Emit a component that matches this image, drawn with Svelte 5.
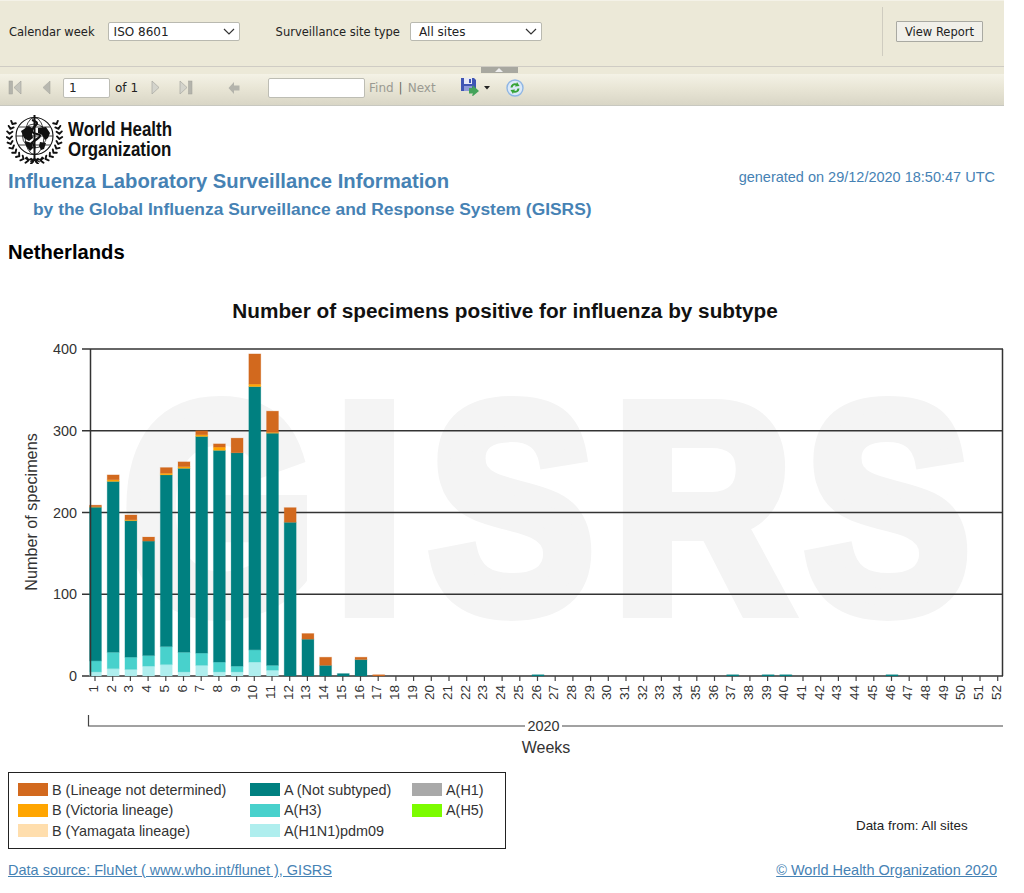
<script>
  const weekRows = [
    [1, 5, 18.5, 206.5, 207, 209],
    [2, 9, 29, 238, 240, 246],
    [3, 8, 23, 190, 191, 197],
    [4, 12, 25, 165, 165, 170],
    [5, 14, 36, 246, 248, 255],
    [6, 5, 29, 254, 256, 262],
    [7, 13, 28, 293, 295, 300],
    [8, 5, 17, 276, 280, 284],
    [9, 5, 12, 273, 273, 291],
    [10, 17, 32, 354, 357, 394],
    [11, 7, 13, 297, 298, 324],
    [12, 0, 0, 188, 188, 206],
    [13, 0, 0, 45, 45, 52],
    [14, 0, 0, 13, 13, 23],
    [15, 0, 0, 3, 3, 3],
    [16, 0, 0, 20, 20, 23],
    [17, 0, 0, 0, 0, 1.6],
    [26, 0, 0, 1.6, 1.6, 1.6],
    [37, 0, 0, 1.6, 1.6, 1.6],
    [39, 0, 0, 1.6, 1.6, 1.6],
    [40, 0, 0, 1.6, 1.6, 1.6],
    [46, 0, 0, 1.6, 1.6, 1.6]
  ];
  const base = 676;
  const scale = 0.8175;
  const cx = (w) => 95.5 + 17.7 * (w - 1);
  const yOf = (v) => base - v * scale;
  const weeks = Array.from({ length: 52 }, (_, i) => i + 1);
  const segments = weekRows.flatMap(([w, pdm, h3, ns, vic, total]) => {
    const parts = [
      ['#afeeee', 0, pdm],
      ['#48d1cc', pdm, h3],
      ['#008080', h3, ns],
      ['#ffa500', ns, vic],
      ['#d2691e', vic, total]
    ];
    return parts
      .filter((p) => p[2] > p[1])
      .map((p) => ({ x: cx(w) - 6, y: yOf(p[2]), h: (p[2] - p[1]) * scale, fill: p[0] }));
  });
  const legend = [
    [
      ['#d2691e', 'B (Lineage not determined)'],
      ['#ffa500', 'B (Victoria lineage)'],
      ['#ffdead', 'B (Yamagata lineage)']
    ],
    [
      ['#008080', 'A (Not subtyped)'],
      ['#48d1cc', 'A(H3)'],
      ['#afeeee', 'A(H1N1)pdm09']
    ],
    [
      ['#a9a9a9', 'A(H1)'],
      ['#7cfc00', 'A(H5)']
    ]
  ];
  // laurel leaves of the emblem, along an arc round the globe
  const leaves = [];
  for (let i = 0; i < 11; i++) {
    const a = ((-28 + i * 11.5) * Math.PI) / 180;
    const r = 25;
    const px = r * Math.cos(a);
    const py = 22 + r * Math.sin(a) * 1.02;
    for (const side of [-1, 1]) {
      const x = 28.5 + side * px;
      const tipOut = 28.5 + side * (px + 3.4 * Math.cos(a - 0.7));
      const tipOutY = py + 3.4 * Math.sin(a - 0.7);
      const tipIn = 28.5 + side * (px - 3.4 * Math.cos(a + 0.7));
      const tipInY = py - 3.4 * Math.sin(a + 0.7);
      leaves.push(`M${x.toFixed(1)} ${py.toFixed(1)}L${tipOut.toFixed(1)} ${tipOutY.toFixed(1)}`);
      leaves.push(`M${x.toFixed(1)} ${py.toFixed(1)}L${tipIn.toFixed(1)} ${tipInY.toFixed(1)}`);
    }
  }
  const laurel = leaves.join('');
</script>

<div class="page">
  <div class="params">
    <div class="fields">
      <span class="lbl first">Calendar week</span>
      <div class="select s1"><span>ISO 8601</span><svg width="12" height="7" viewBox="0 0 12 7"><path d="M1 1l5 5 5-5" fill="none" stroke="#333" stroke-width="1.2"/></svg></div>
      <span class="lbl second">Surveillance site type</span>
      <div class="select s2"><span>All sites</span><svg width="12" height="7" viewBox="0 0 12 7"><path d="M1 1l5 5 5-5" fill="none" stroke="#333" stroke-width="1.2"/></svg></div>
    </div>
    <div class="action"><button class="view">View Report</button></div>
  </div>
  <div class="splitter"><div class="handle"><svg width="8" height="4" viewBox="0 0 8 4"><path d="M0 4l4-4 4 4z" fill="#eee"/></svg></div></div>
  <div class="toolbar">
    <svg class="ic first-ic" width="14" height="15" viewBox="0 0 14 15"><rect x="1" y="1" width="3.500" height="13" fill="#b4b4ac" stroke="#a0a098" stroke-width=".5"/><path d="M13 1v13L6 7.500z" fill="#c4c4bc" stroke="#a0a098" stroke-width=".6"/></svg>
    <svg class="ic prev-ic" width="10" height="15" viewBox="0 0 10 15"><path d="M9 1v13L2 7.500z" fill="#b8b8b0" stroke="#a8a8a0" stroke-width=".6"/></svg>
    <div class="inp page-inp">1</div>
    <span class="of">of 1</span>
    <svg class="ic next-ic" width="10" height="15" viewBox="0 0 10 15"><path d="M1 1v13l7-6.500z" fill="#d4d4cc" stroke="#a8a8a0" stroke-width=".7"/></svg>
    <svg class="ic last-ic" width="14" height="15" viewBox="0 0 14 15"><path d="M1 1v13l7-6.500z" fill="#d4d4cc" stroke="#a8a8a0" stroke-width=".7"/><rect x="9.500" y="1" width="3.500" height="13" fill="#b4b4ac" stroke="#a0a098" stroke-width=".5"/></svg>
    <svg class="ic back-ic" width="12" height="14" viewBox="0 0 12 14"><path d="M6 1v3.500h5.500v5H6V13L.5 7z" fill="#b4b4ac"/></svg>
    <div class="inp find-inp"></div>
    <span class="find">Find</span><span class="sep">|</span><span class="next">Next</span>
    <svg class="ic save-ic" width="18" height="18" viewBox="0 0 18 18">
      <path d="M0 0h13l2 2v11H0z" fill="#3f55b4"/>
      <rect x="3" y="0" width="8" height="6" fill="#e6e8f6"/>
      <rect x="8" y="1" width="2" height="4" fill="#3f55b4"/>
      <rect x="3" y="8" width="8" height="5" fill="#8e9ad8"/>
      <path d="M8 10h4l-1-2 1-.5 6 5.500-6 5-1-.5 1-2H8z" fill="#44a35a"/>
    </svg>
    <svg class="ic drop-ic" width="6" height="4" viewBox="0 0 6 4"><path d="M0 0h6L3 3.500z" fill="#222"/></svg>
    <svg class="ic refresh-ic" width="18" height="18" viewBox="0 0 18 18">
      <circle cx="9" cy="9" r="8" fill="#dbe9f8" stroke="#8fb6e4" stroke-width="1.400"/>
      <path d="M4.500 8.500A4.500 4.500 0 0 1 10.500 4.500l.5-1.500 2.500 4-4.500 .5.500-1.500A2.800 2.800 0 0 0 6.500 8.500z" fill="#36a336"/>
      <path d="M13.500 9.500A4.500 4.500 0 0 1 7.500 13.500L7 15l-2.500-4 4.500-.5-.5 1.500A2.800 2.800 0 0 0 11.500 9.500z" fill="#36a336"/>
    </svg>
  </div>

  <div class="report">
    <div class="logo">
      <svg width="58" height="50" viewBox="0 0 58 50">
        <g fill="none" stroke="#111">
          <circle cx="28.500" cy="22" r="18.500" stroke-width="1.100"/>
          <ellipse cx="28.500" cy="22" rx="9.500" ry="18.500" stroke-width=".8"/>
          <circle cx="28.500" cy="22" r="12" stroke-width=".8"/>
          <path d="M10 22h37M13 13h31M13 31h31" stroke-width=".8"/>
        </g>
        <path d="M15 17l8-5 4 3-1 5 1 4-4 3-5-3zM32 14l8-1 4 6-2 5-3 2-3-5-4-2zM19 27l7 2 1 5-3 3-4-5zM34 28l6 1-2 6-3 1-2-4z" fill="#111"/>
        <path d="M28.500 1v46" stroke="#111" stroke-width="2"/>
        <path d="M26 6q7 2 4 5t-4 5q-1 3 5 4t0 5-5 4 3 5" fill="none" stroke="#111" stroke-width="2.200"/>
        <path d={laurel} fill="none" stroke="#111" stroke-width="1.900" stroke-linecap="round"/>
        <path d="M19 44q5 3 9.500 1 4.500 2 9.500-1" fill="none" stroke="#111" stroke-width="1.600"/>
        <path d="M24 48l5-2 5 2" fill="none" stroke="#111" stroke-width="1"/>
      </svg>
      <div class="who"><div>World Health</div><div>Organization</div></div>
    </div>
    <div class="title-row">
      <div class="h1">Influenza Laboratory Surveillance Information</div>
      <div class="gen">generated on 29/12/2020 18:50:47 UTC</div>
    </div>
    <div class="h2">by the Global Influenza Surveillance and Response System (GISRS)</div>
    <div class="country">Netherlands</div>
    <div class="chart-title">Number of specimens positive for influenza by subtype</div>

    <svg class="chart" width="1024" height="420" viewBox="0 340 1024 420">
      <text class="mark" transform="scale(.84 1)" x="146.400 398.800 510.700 729.800 958.300" y="610">GISRS</text>
      {#each [0, 100, 200, 300, 400] as v}
        <line x1="82" x2="1003" y1={yOf(v)} y2={yOf(v)} class="grid"/>
        <text class="tick" x="77" y={yOf(v) + 5} text-anchor="end">{v}</text>
      {/each}
      {#each segments as s}
        <rect class="seg" x={s.x} y={s.y} width="12" height={s.h} fill={s.fill} stroke={s.fill}/>
      {/each}
      <line x1="90.500" x2="90.500" y1="349" y2="676" class="axis"/>
      <line x1="1002.500" x2="1002.500" y1="349" y2="676" class="axis"/>
      {#each weeks as w}
        <line x1={cx(w) - 0.5} x2={cx(w) - 0.5} y1="676" y2="681" class="tickline"/>
        <text class="wk" transform="translate({cx(w) + 2.500} 685) rotate(-90)" text-anchor="end">{w}</text>
      {/each}
      <path d="M88.500 715v11H525M562 726h441" class="tickline" fill="none"/>
      <text class="tick" x="543.500" y="731" text-anchor="middle">2020</text>
      <text class="axis-t" x="546" y="753" text-anchor="middle">Weeks</text>
      <text class="axis-t y" transform="translate(37 512) rotate(-90)" text-anchor="middle">Number of specimens</text>
    </svg>

    <div class="foot-row">
      <div class="legend">
        {#each legend as col, i}
          <div class="col c{i}">
            {#each col as [color, label]}
              <div class="item"><span class="swatch" style="background:{color}"></span>{label}</div>
            {/each}
          </div>
        {/each}
      </div>
      <div class="from">Data from: All sites</div>
    </div>
    <div class="links">
      <span class="link">Data source: FluNet ( www.who.int/flunet ), GISRS</span>
      <span class="link">© World Health Organization 2020</span>
    </div>
  </div>
</div>

<style>
  :global(body) { margin: 0; background: #fff; }
  .page { width: 1004px; height: 893px; overflow: hidden; font-family: "Liberation Sans", Arial, sans-serif; }
  .params { height: 66px; box-sizing: border-box; background: #ece9d8; border-top: 1px solid #f4f2e8; display: flex; justify-content: space-between; font-family: "DejaVu Sans", sans-serif; font-size: 11.500px; color: #222; }
  .fields { display: flex; align-items: center; padding-left: 9px; padding-bottom: 4px; }
  .lbl.second { margin-left: 36px; }
  .select { box-sizing: border-box; height: 19px; background: #fff; border: 1px solid #b9b9b0; border-radius: 2px; display: flex; align-items: center; justify-content: space-between; padding: 0 4px 0 5px; font-size: 12px; }
  .s1 { width: 132px; margin-left: 13px; }
  .s2 { width: 132px; margin-left: 10px; padding-left: 8px; }
  .action { width: 122px; margin: 6px 0 10px; box-sizing: border-box; border-left: 1px solid #cfccc0; display: flex; align-items: center; padding-left: 13px; }
  .view { box-sizing: border-box; width: 87px; height: 21px; padding: 0; background: #f1f0ea; border: 1px solid #a9a9a2; border-radius: 1px; font: inherit; color: #222; }
  .splitter { height: 7px; background: #ece9d8; border-top: 1px solid #cfccc4; display: flex; justify-content: center; padding-right: 6px; }
  .handle { width: 37px; height: 6px; background: #a8a8a0; display: flex; align-items: center; justify-content: center; }
  .toolbar { height: 32px; box-sizing: border-box; border-bottom: 1px solid #c8c8c0; background: linear-gradient(#f4f2e6, #e9e6d6 45%, #d9d6c6); display: flex; align-items: center; padding-bottom: 4px; font-family: "DejaVu Sans", sans-serif; font-size: 12px; color: #222; }
  .ic { flex: none; display: block; }
  .first-ic { margin-left: 8px; }
  .prev-ic { margin-left: 19px; }
  .inp { box-sizing: border-box; height: 20px; background: #fff; border: 1px solid #bdbdb4; border-radius: 2px; display: flex; align-items: center; padding-left: 5px; flex: none; }
  .page-inp { width: 47px; margin-left: 12px; }
  .of { margin-left: 5px; }
  .next-ic { margin-left: 13px; }
  .last-ic { margin-left: 18px; }
  .back-ic { margin-left: 35px; }
  .find-inp { width: 97px; margin-left: 28px; }
  .find { margin-left: 4px; color: #9a9a92; }
  .sep { margin: 0 5px; color: #6a6a60; }
  .next { color: #9a9a92; }
  .save-ic { margin-left: 25px; margin-bottom: 2px; }
  .drop-ic { margin-left: 5px; }
  .refresh-ic { margin-left: 16px; }
  .report { position: relative; }
  .logo { display: flex; align-items: center; padding: 7px 0 0 6px; height: 52px; }
  .who { margin-left: 4px; font-family: "Liberation Sans", sans-serif; font-weight: bold; font-size: 20.500px; line-height: 20px; color: #111; transform: scaleX(.825); transform-origin: left center; }
  .title-row { display: flex; justify-content: space-between; padding: 3px 9px 0 8px; }
  .h1 { font-size: 20.250px; font-weight: bold; color: #4682b4; line-height: 26px; }
  .gen { font-size: 14.500px; color: #4682b4; line-height: 20px; margin-top: -1px; }
  .h2 { font-size: 17.400px; font-weight: bold; color: #4682b4; margin: 5px 0 0 33px; line-height: 20px; }
  .country { font-size: 20.200px; font-weight: bold; color: #000; margin: 21px 0 0 8px; line-height: 24px; }
  .chart-title { font-size: 20.760px; font-weight: bold; color: #111; text-align: center; margin: 34px 0 0 0; line-height: 26px; width: 1010px; }
  .chart { display: block; margin-top: 16px; }
  .mark { font-size: 295px; font-weight: bold; fill: #f4f4f4; stroke: #f4f4f4; stroke-width: 16px; font-family: "Liberation Sans", sans-serif; }
  .grid { stroke: #333; stroke-width: 1.700; }
  .axis { stroke: #333; stroke-width: 1.500; }
  .tickline { stroke: #444; stroke-width: 1.200; }
  .seg { stroke-width: 1; stroke-opacity: .22; }
  .tick { font-size: 14.400px; fill: #333; }
  .wk { font-size: 13.500px; fill: #333; }
  .axis-t { font-size: 16px; fill: #333; }
  .axis-t.y { font-size: 16.200px; }
  .foot-row { display: flex; align-items: flex-end; margin-top: 12px; }
  .legend { box-sizing: border-box; width: 498px; height: 77px; margin-left: 8px; border: 1px solid #222; display: flex; padding: 9px 0 0 9px; font-size: 14.400px; color: #333; }
  .col { display: flex; flex-direction: column; gap: 5.700px; }
  .c0 { width: 232px; }
  .c1 { width: 162px; }
  .item { display: flex; align-items: center; height: 15px; }
  .swatch { width: 30px; height: 13px; margin-right: 4px; flex: none; }
  .from { margin: 0 0 16px 350px; font-size: 13.400px; color: #222; }
  .links { display: flex; justify-content: space-between; padding: 13px 7px 0 8px; font-size: 14.500px; color: #4682b4; }
  .link { text-decoration: underline; }
</style>
